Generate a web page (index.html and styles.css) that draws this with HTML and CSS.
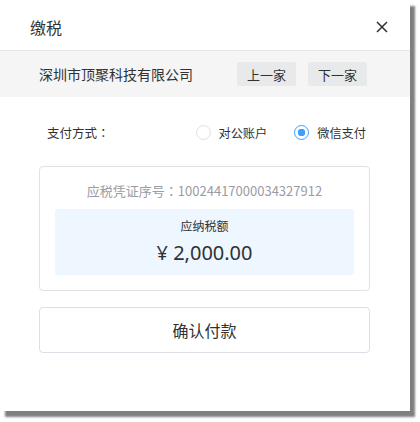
FILE: index.html
```html
<!DOCTYPE html>
<html lang="zh">
<head>
<meta charset="utf-8">
<link rel="stylesheet" href="styles.css">
</head>
<body>
<div class="dialog">
  <div class="header">
    <span class="title">缴税</span>
    <span class="close"><svg width="12" height="12" viewBox="0 0 12 12"><path d="M1 1L11 11M11 1L1 11" stroke="#303133" stroke-width="1.5" fill="none"/></svg></span>
  </div>
  <div class="company">
    <span class="name">深圳市顶聚科技有限公司</span>
    <div class="nav">
      <span class="btn">上一家</span>
      <span class="btn">下一家</span>
    </div>
  </div>
  <div class="body">
    <div class="pay">
      <span class="label">支付方式<span class="colon">：</span></span>
      <div class="radios">
        <span class="radio"><span class="dot"></span>对公账户</span>
        <span class="radio on"><span class="dot"></span>微信支付</span>
      </div>
    </div>
    <div class="card">
      <div class="serial">应税凭证序号<span class="colon">：</span>10024417000034327912</div>
      <div class="amount-box">
        <div class="amount-label">应纳税额</div>
        <div class="amount">¥ 2,000.00</div>
      </div>
    </div>
    <div class="confirm">确认付款</div>
  </div>
</div>
</body>
</html>
```
FILE: styles.css
```css
* { box-sizing: border-box; }
html, body { margin: 0; padding: 0; background: #fff; }
body {
  font-family: "Noto Sans CJK SC", "Noto Sans", sans-serif;
  color: #303133;
  height: 422px;
  text-spacing-trim: space-all;
}
.colon {
  font-family: "Noto Sans CJK TC", sans-serif;
  display: inline-block;
  width: 1em;
  text-align: center;
}
.dialog {
  width: 410px;
  height: 411px;
  background: #fff;
  box-shadow: 5px 6px 2px rgba(0,0,0,0.5);
}
.header {
  height: 51px;
  display: flex;
  align-items: center;
  justify-content: space-between;
  padding: 4px 22px 0 30px;
  border-bottom: 1px solid #e6e6e6;
}
.title { font-size: 16px; line-height: 20px; }
.close { display: flex; width: 12px; height: 12px; }
.company {
  height: 46px;
  background: #f5f5f6;
  display: flex;
  align-items: center;
  padding: 0 43px 0 39px;
  justify-content: space-between;
}
.name { font-size: 14px; color: #303133; }
.nav { display: flex; gap: 12px; }
.btn {
  width: 59px;
  height: 24px;
  display: flex;
  align-items: center;
  justify-content: center;
  background: #e8e9eb;
  border-radius: 2px;
  font-size: 13px;
  color: #303133;
}
.body { padding: 0 40px 0 39px; }
.pay {
  height: 69px;
  display: flex;
  align-items: center;
  justify-content: space-between;
  padding: 2px 4px 0 8px;
}
.label { font-size: 12.5px; color: #303133; }
.radios { display: flex; gap: 27px; }
.radio {
  display: flex;
  align-items: center;
  gap: 8px;
  font-size: 12.2px;
  color: #303133;
}
.dot {
  width: 15px;
  height: 15px;
  border-radius: 50%;
  border: 1px solid #dfe1e6;
  background: #fff;
  display: inline-block;
}
.radio.on .dot {
  border-color: #409eff;
  background: radial-gradient(circle, #409eff 0 3.5px, #fff 4px);
}
.card {
  border: 1px solid #e2e2e2;
  border-radius: 4px;
  padding: 0 15px 15px;
}
.serial {
  height: 42px;
  display: flex;
  align-items: center;
  justify-content: center;
  font-size: 13px;
  color: #9a9ca3;
  padding-top: 5px;
}
.amount-box {
  background: #eef6ff;
  border-radius: 3px;
  height: 66px;
  display: flex;
  flex-direction: column;
  align-items: center;
  padding-top: 8px;
}
.amount-label { font-size: 12px; line-height: 18px; color: #303133; }
.amount { font-size: 20px; line-height: 30px; margin-top: 3px; color: #303133; font-family: "Noto Sans", "Noto Sans CJK SC", sans-serif; }
.confirm {
  margin-top: 16px;
  height: 46px;
  border: 1px solid #dcdfe6;
  border-radius: 4px;
  display: flex;
  align-items: center;
  justify-content: center;
  font-size: 16px;
  color: #303133;
}
```
